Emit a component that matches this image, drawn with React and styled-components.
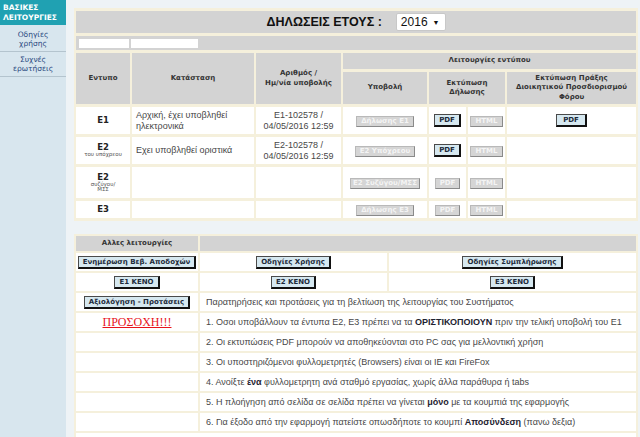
import React from "react";
import styled, { createGlobalStyle } from "styled-components";

const GlobalStyle = createGlobalStyle`
  html, body {
    margin: 0;
    padding: 0;
    background: #eef3f6;
  }
  body {
    font-family: "Liberation Sans", Arial, sans-serif;
    color: #444;
  }
`;

const Page = styled.div`
  display: flex;
  min-height: 437px;
`;

const Sidebar = styled.nav`
  width: 66px;
  flex: none;
  background: #d8e6ee;
`;

const SideHead = styled.div`
  height: 25px;
  box-sizing: border-box;
  padding: 3px 0 0 3px;
  margin-bottom: 2px;
  background: #20a1b2;
  color: #fff;
  font: bold 7.5px/9.5px "DejaVu Sans", Verdana, sans-serif;
`;

const SideLink = styled.div`
  height: 25px;
  box-sizing: border-box;
  padding-top: 3px;
  border-bottom: 1px solid #b4c4ce;
  text-align: center;
  color: #28487e;
  font: 7.5px/9px "DejaVu Sans", Verdana, sans-serif;
`;

const Main = styled.main`
  flex: 1;
  padding: 8px 2px 0 8px;
`;

const Table = styled.table`
  width: 564px;
  table-layout: fixed;
  border-collapse: separate;
  border-spacing: ${p => p.$gap};
  background: #f5f0dc;
  margin-bottom: ${p => p.$mb || 0}px;
`;

const Col = styled.col`
  width: ${p => p.$w}px;
`;

const Cell = styled.td`
  height: ${p => (p.$h ? `${p.$h}px` : "auto")};
  padding: ${p => p.$pad || "0 3px"};
  background: ${p => (p.$head ? "#d3d3d3" : "#fff")};
  text-align: ${p => p.$align || "center"};
  vertical-align: middle;
  color: ${p => (p.$head ? "#333" : "#474747")};
  font: ${p =>
    p.$head
      ? 'bold 7px/9.5px "DejaVu Sans", Verdana, sans-serif'
      : '9px/11px "Liberation Sans", Arial, sans-serif'};
  overflow: hidden;
`;

const TitleBar = styled.div`
  display: flex;
  justify-content: center;
  align-items: center;
  gap: 14px;
`;

const Title = styled.span`
  font: bold 12.5px "Liberation Sans", Arial, sans-serif;
  color: #111;
`;

const FakeSelect = styled.span`
  display: inline-flex;
  align-items: center;
  gap: 5px;
  height: 18px;
  box-sizing: border-box;
  padding: 0 5px 0 4px;
  background: #fff;
  border: 1px solid #c8c8c8;
  border-radius: 2px;
  font: 12px "Liberation Sans", Arial, sans-serif;
  color: #111;

  & i {
    font-style: normal;
    font-size: 7px;
  }
`;

const Inputs = styled.div`
  display: flex;
  gap: 2px;
  padding-left: 3px;
`;

const InputBox = styled.span`
  width: ${p => p.$w}px;
  height: 9px;
  background: #fff;
`;

const FormCode = styled.div`
  font: bold 8.5px/9px "DejaVu Sans", Verdana, sans-serif;
  color: #222;
`;

const FormNote = styled.div`
  font: 5.5px/5.5px "DejaVu Sans", Verdana, sans-serif;
  color: #555;
`;

const Btn = styled.span`
  display: inline-block;
  box-sizing: border-box;
  height: ${p => (p.$tall ? 13 : 11)}px;
  padding: 0 ${p => p.$px || 4}px;
  font: bold 7px/${p => (p.$tall ? 10 : 8)}px "DejaVu Sans", Verdana, sans-serif;
  white-space: nowrap;
  background: ${p => (p.$off ? "#d5d5d5" : "#d6e8f0")};
  color: ${p => (p.$off ? "#f4f4f4" : "#1c2a3a")};
  border: 1px solid ${p => (p.$off ? "#b9b9b9" : "#4a4a4a")};
  border-right: ${p => (p.$off ? "1px solid #8a8a8a" : "2px solid #111")};
  border-bottom: ${p => (p.$off ? "1px solid #8a8a8a" : "2px solid #111")};
`;

const Warning = styled.span`
  font: 12px "Liberation Serif", "Times New Roman", serif;
  color: #e8141b;
  text-decoration: underline;
`;

const Strong = styled.b`
  color: #1e2230;
`;

const rows = [
  {
    code: "E1",
    status: "Αρχική, έχει υποβληθεί ηλεκτρονικά",
    number: ["E1-102578 /", "04/05/2016 12:59"],
    submit: "Δήλωσης  Ε1",
    pdf: true,
    act: true,
    h: 27,
  },
  {
    code: "E2",
    note: ["του υπόχρεου"],
    status: "Εχει υποβληθεί οριστικά",
    number: ["E2-102578 /", "04/05/2016 12:59"],
    submit: "Ε2 Υπόχρεου",
    pdf: true,
    h: 27,
  },
  {
    code: "E2",
    note: ["συζύγου/", "ΜΣΣ"],
    submit: "Ε2 Συζύγου/ΜΣΣ",
    px: 2,
    h: 31,
  },
  { code: "E3", submit: "Δήλωσης  Ε3", h: 17 },
];

const notes = [
  <>
    2. Οι εκτυπώσεις PDF μπορούν να αποθηκεύονται στο PC σας για μελλοντική
    χρήση
  </>,
  <>3. Οι υποστηριζόμενοι φυλλομετρητές (Browsers) είναι οι ΙΕ και FireFox</>,
  <>
    4. Ανοίξτε <Strong>ένα</Strong> φυλλομετρητη ανά σταθμό εργασίας, χωρίς
    άλλα παράθυρα ή tabs
  </>,
  <>
    5. Η πλοήγηση από σελίδα σε σελίδα πρέπει να γίνεται <Strong>μόνο</Strong>{" "}
    με τα κουμπιά της εφαρμογής
  </>,
  <>
    6. Για έξοδο από την εφαρμογή πατείστε οπωσδήποτε το κουμπί{" "}
    <Strong>Αποσύνδεση</Strong> (πανω δεξια)
  </>,
];

function Declarations() {
  return (
    <Table $gap="2px 3px" $mb={13}>
      <colgroup>
        <Col $w={54} />
        <Col $w={122} />
        <Col $w={85} />
        <Col $w={84} />
        <Col $w={37} />
        <Col $w={37} />
        <Col $w={129} />
      </colgroup>
      <tbody>
        <tr>
          <Cell $head colSpan={7} $h={22}>
            <TitleBar>
              <Title>ΔΗΛΩΣΕΙΣ ΕΤΟΥΣ :</Title>
              <FakeSelect>
                2016 <i>▼</i>
              </FakeSelect>
            </TitleBar>
          </Cell>
        </tr>
        <tr>
          <Cell $head colSpan={7} $h={14} $pad="0">
            <Inputs>
              <InputBox $w={50} />
              <InputBox $w={67} />
            </Inputs>
          </Cell>
        </tr>
        <tr>
          <Cell $head rowSpan={2}>Εντυπο</Cell>
          <Cell $head rowSpan={2}>Κατάσταση</Cell>
          <Cell $head rowSpan={2}>
            Αριθμός /<br />
            Ημ/νία υποβολής
          </Cell>
          <Cell $head colSpan={4} $h={16}>
            Λειτουργίες εντύπου
          </Cell>
        </tr>
        <tr>
          <Cell $head $h={32}>Υποβολή</Cell>
          <Cell $head colSpan={2}>
            Εκτύπωση
            <br />
            Δήλωσης
          </Cell>
          <Cell $head $pad="0 1px">
            Εκτύπωση Πράξης
            <br />
            Διοικητικού Προσδιορισμού
            <br />
            Φόρου
          </Cell>
        </tr>
        {rows.map((r, i) => (
          <tr key={i}>
            <Cell $h={r.h} $pad="0 1px">
              <FormCode>{r.code}</FormCode>
              {r.note && r.note.map(n => <FormNote key={n}>{n}</FormNote>)}
            </Cell>
            <Cell $align="left" $pad="0 4px">
              {r.status}
            </Cell>
            <Cell>
              {r.number && (
                <>
                  {r.number[0]}
                  <br />
                  {r.number[1]}
                </>
              )}
            </Cell>
            <Cell $pad="0">
              <Btn $off $px={r.px}>
                {r.submit}
              </Btn>
            </Cell>
            <Cell $pad="0">
              <Btn $off={!r.pdf} $tall={r.pdf}>
                PDF
              </Btn>
            </Cell>
            <Cell $pad="0">
              <Btn $off>HTML</Btn>
            </Cell>
            <Cell>
              {r.act && (
                <Btn $tall $px={6}>
                  PDF
                </Btn>
              )}
            </Cell>
          </tr>
        ))}
      </tbody>
    </Table>
  );
}

function OtherActions() {
  return (
    <Table $gap="2px">
      <colgroup>
        <Col $w={122} />
        <Col $w={187} />
        <Col $w={247} />
      </colgroup>
      <tbody>
        <tr>
          <Cell $head $h={15}>
            Αλλες λειτουργίες
          </Cell>
          <Cell $head colSpan={2} />
        </tr>
        <tr>
          <Cell $h={18} $pad="0">
            <Btn $tall $px={4}>
              Ενημέρωση Βεβ. Αποδοχών
            </Btn>
          </Cell>
          <Cell>
            <Btn $tall>Οδηγίες Χρήσης</Btn>
          </Cell>
          <Cell>
            <Btn $tall>Οδηγίες Συμπλήρωσης</Btn>
          </Cell>
        </tr>
        <tr>
          <Cell $h={18}>
            <Btn $tall $px={4}>
              Ε1 ΚΕΝΟ
            </Btn>
          </Cell>
          <Cell>
            <Btn $tall $px={4}>
              Ε2 ΚΕΝΟ
            </Btn>
          </Cell>
          <Cell>
            <Btn $tall $px={4}>
              Ε3 ΚΕΝΟ
            </Btn>
          </Cell>
        </tr>
        <tr>
          <Cell $h={18}>
            <Btn $tall>Αξιολόγηση - Προτάσεις</Btn>
          </Cell>
          <Cell colSpan={2} $align="left" $pad="0 6px">
            Παρατηρήσεις και προτάσεις για τη βελτίωση της λειτουργίας του
            Συστήματος
          </Cell>
        </tr>
        <tr>
          <Cell $h={18}>
            <Warning>ΠΡΟΣΟΧΗ!!!</Warning>
          </Cell>
          <Cell colSpan={2} $align="left" $pad="0 6px">
            1. Οσοι υποβάλλουν τα έντυπα Ε2, Ε3 πρέπει να τα{" "}
            <Strong>ΟΡΙΣΤΙΚΟΠΟΙΟΥΝ</Strong> πριν την τελική υποβολή του Ε1
          </Cell>
        </tr>
        {notes.map((n, i) => (
          <tr key={i}>
            <Cell $h={18} />
            <Cell colSpan={2} $align="left" $pad="0 6px">
              {n}
            </Cell>
          </tr>
        ))}
        <tr>
          <Cell colSpan={3} $h={18} />
        </tr>
      </tbody>
    </Table>
  );
}

export default function App() {
  return (
    <>
      <GlobalStyle />
      <Page>
        <Sidebar>
          <SideHead>
            ΒΑΣΙΚΕΣ
            <br />
            ΛΕΙΤΟΥΡΓΙΕΣ
          </SideHead>
          <SideLink>
            Οδηγίες
            <br />
            χρήσης
          </SideLink>
          <SideLink>
            Συχνές
            <br />
            ερωτήσεις
          </SideLink>
        </Sidebar>
        <Main>
          <Declarations />
          <OtherActions />
        </Main>
      </Page>
    </>
  );
}
